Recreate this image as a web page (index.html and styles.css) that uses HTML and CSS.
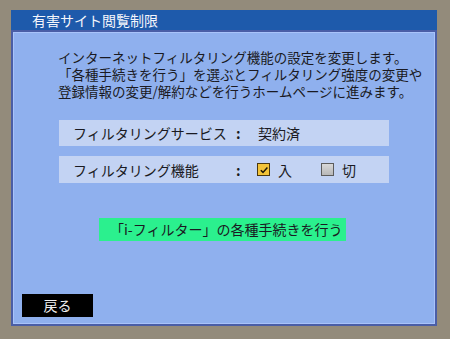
FILE: index.html
```html
<!DOCTYPE html>
<html lang="ja">
<head>
    <meta charset="UTF-8">
    <title>有害サイト閲覧制限</title>
    <link rel="stylesheet" href="styles.css">
</head>
<body>
    <div class="window">
        <div class="title-bar">有害サイト閲覧制限</div>
        <div class="panel">
            <div class="intro">
                <div class="line">インターネットフィルタリング機能の設定を変更します。</div>
                <div class="line">「各種手続きを行う」を選ぶとフィルタリング強度の変更や</div>
                <div class="line">登録情報の変更/解約などを行うホームページに進みます。</div>
            </div>

            <div class="rows">
                <div class="row">
                    <span class="label">フィルタリングサービス</span>
                    <span class="colon">:</span>
                    <span class="value">契約済</span>
                </div>
                <div class="row">
                    <span class="label">フィルタリング機能</span>
                    <span class="colon">:</span>
                    <span class="value options">
                        <span class="option">
                            <span class="check checked">
                                <svg viewBox="0 0 10 10" width="10" height="10"><path d="M1.8 5.2 L4 7.4 L8.4 2.6" fill="none" stroke="#1c1606" stroke-width="1.5"/></svg>
                            </span>入
                        </span>
                        <span class="option">
                            <span class="check"></span>切
                        </span>
                    </span>
                </div>
            </div>

            <div class="action">「i-フィルター」の各種手続きを行う</div>

            <div class="back">戻る</div>
        </div>
    </div>
</body>
</html>
```

FILE: styles.css
```css
* { margin: 0; padding: 0; box-sizing: border-box; }

body {
    font-family: "Noto Sans CJK JP", "Noto Sans", sans-serif;
    background: #938b7b;
    color: #1a1a22;
    width: 450px;
    height: 339px;
    overflow: hidden;
}

.window {
    width: 426px;
    margin: 10px 0 0 11px;
}

.title-bar {
    height: 20px;
    background: #1e5aab;
    color: #f4f6fb;
    font-size: 14px;
    line-height: 20px;
    padding-left: 21px;
}

.panel {
    height: 296px;
    background: #8fb0ee;
    border: 2px solid #4a5ea6;
    box-shadow: inset 1px 1px 0 #a9c3fa, inset -1px -1px 0 #a9c3fa;
    display: flex;
    flex-direction: column;
    padding: 17px 0 0 45px;
}

.intro {
    font-size: 13.5px;
    white-space: nowrap;
}

.line {
    height: 17px;
    line-height: 17px;
}

.rows {
    display: flex;
    flex-direction: column;
    gap: 10px;
    margin: 20px 0 0 1px;
}

.row {
    width: 330px;
    height: 26px;
    background: #c3d3f3;
    display: grid;
    grid-template-columns: 163px 22px 1fr;
    align-items: center;
    padding-left: 14px;
    font-size: 14px;
}

.row + .row {
    height: 27px;
}

.colon {
    font-weight: bold;
}

.options {
    display: flex;
    gap: 29px;
    margin-left: -1px;
}

.option {
    display: flex;
    align-items: center;
    gap: 8px;
}

.check {
    width: 13px;
    height: 13px;
    border: 1px solid #5c5c5c;
    background: linear-gradient(#d8d8d8, #b8b8b8);
    display: flex;
    align-items: center;
    justify-content: center;
}

.check.checked {
    border-color: #4a3810;
    background: #f2c338;
}

.action {
    align-self: flex-start;
    margin: 35px 0 0 41px;
    width: 247px;
    height: 23px;
    background: #2bf08e;
    font-size: 14px;
    line-height: 23px;
    padding-left: 11px;
    white-space: nowrap;
}

.back {
    margin: auto 0 7px -36px;
    width: 71px;
    height: 23px;
    background: #000;
    color: #f0f0f0;
    font-size: 14px;
    line-height: 23px;
    text-align: center;
}
```
